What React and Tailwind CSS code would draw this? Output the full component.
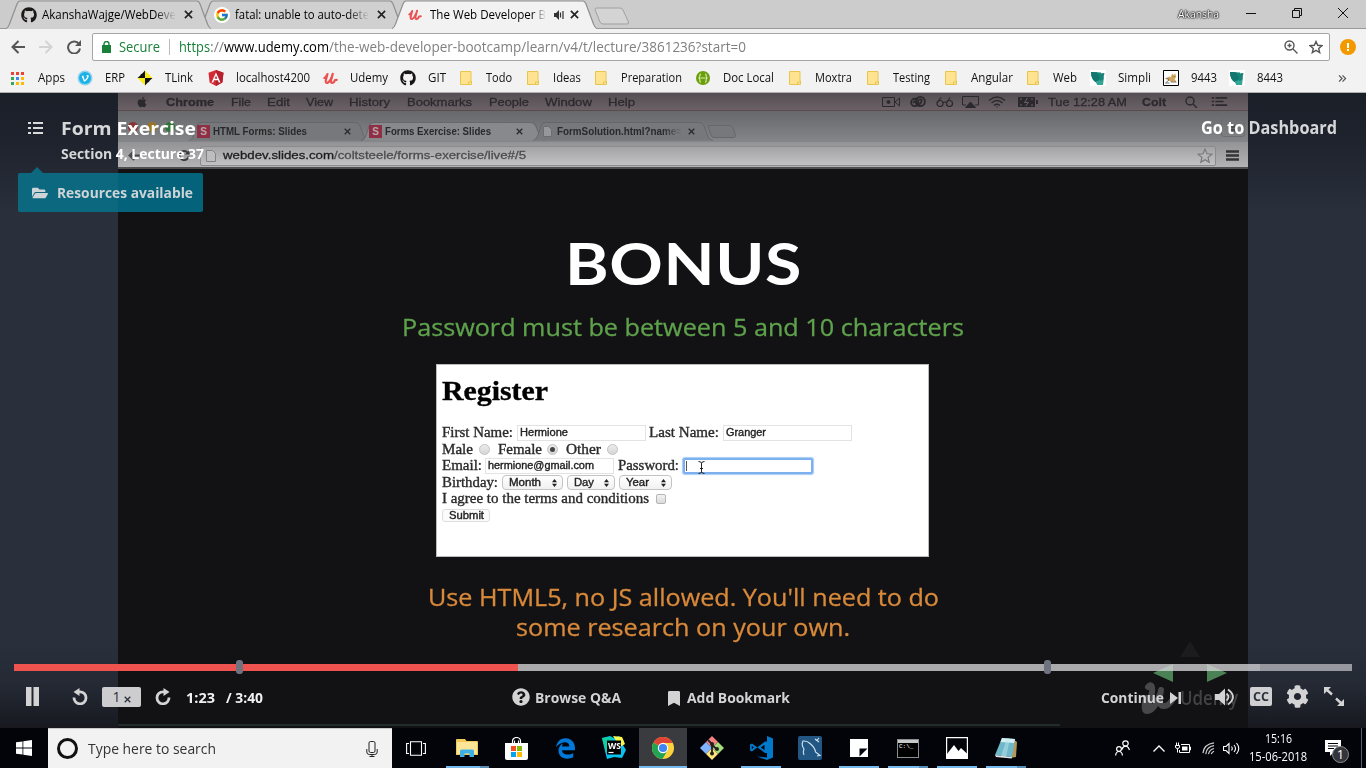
import React, { useLayoutEffect, useRef } from "react";
import { FaGithub, FaFolderOpen, FaQuestionCircle, FaBookmark, FaCog, FaApple, FaEdgeLegacy } from "react-icons/fa";
import { FcGoogle } from "react-icons/fc";

/* Text that is fitted horizontally to the width of its box. */
function Fit({ className = "", children }) {
  const outer = useRef(null);
  const inner = useRef(null);
  useLayoutEffect(() => {
    const s = outer.current.clientWidth / inner.current.getBoundingClientRect().width;
    inner.current.style.transform = `scaleX(${s})`;
  }, []);
  return (
    <span ref={outer} className={`block shrink-0 whitespace-nowrap ${className}`}>
      <span ref={inner} className="inline-block origin-left">{children}</span>
    </span>
  );
}

function Close({ size = "h-[9px] w-[9px]", className = "" }) {
  return (
    <svg viewBox="0 0 10 10" className={`shrink-0 ${size} ${className}`} fill="none" stroke="currentColor" strokeWidth="1.8">
      <path d="M1 1l8 8M9 1l-8 8" />
    </svg>
  );
}

function UdemyMark({ className = "" }) {
  return (
    <svg viewBox="0 0 16 14" className={`shrink-0 ${className}`} fill="none" stroke="currentColor" strokeLinecap="round" strokeLinejoin="round">
      <path d="M1.300 6.500Q3.500 5 4.800 2.200L3 9" strokeWidth="2.200" />
      <path d="M3 8.500Q2.300 12.300 4.600 11.800Q7 10.800 9 6" strokeWidth="2.200" />
      <path d="M10.400 2L8.600 8.500Q8 11.800 10 11.800Q12 11.300 12.800 8.700L14.700 8.500" strokeWidth="2.400" />
    </svg>
  );
}

function Tab({ active, z, icon, children, extra, closeClass, textClass }) {
  return (
    <div className={`relative -ml-3 flex h-[29px] w-[205px] shrink-0 items-center ${z}`}>
      <svg className="absolute inset-0" width="205" height="29" viewBox="0 0 205 29">
        <path d="M0 28.5C2 28 2.5 26.500 3.500 24L11 4C12 1.500 12.500 1 14 1H191C192.500 1 193 1.500 194 4L201.500 24C202.500 26.500 203 28 205 28.500V29H0Z" fill={active ? "#f2f2f2" : "#d0d0d0"} />
        <path d="M0 28.5C2 28 2.5 26.5 3.5 24L11 4C12 1.5 12.5 1 14 1H191C192.500 1 193 1.500 194 4L201.500 24C202.500 26.500 203 28 205 28.500" fill="none" stroke="#8f8f8f" strokeWidth="1.2" />
      </svg>
      <div className="relative ml-[14px] flex h-4 w-[18px] shrink-0 items-center justify-center">{icon}</div>
      <Fit className={`relative text-[12px] leading-[16px] ${textClass}`}>{children}</Fit>
      {extra}
      <Close className={`relative text-[#222] ${closeClass}`} />
    </div>
  );
}

const Folder = () => (
  <svg viewBox="0 0 12 14" className="h-[14px] w-3">
    <path d="M.5.5h10.500v9.500h.5v3.500h-11z" fill="#ffe391" stroke="#e8c64d" />
    <path d="M8.500 13.500v-2.500h2.500" fill="none" stroke="#e8c64d" />
  </svg>
);

const AppsIcon = () => (
  <span className="-ml-px grid grid-cols-3 gap-[2px]">
    {["bg-[#ea4335]", "bg-[#ea4335]", "bg-[#ea4335]", "bg-[#34a853]", "bg-[#4285f4]", "bg-[#fbbc05]", "bg-[#34a853]", "bg-[#fbbc05]", "bg-[#fbbc05]"].map((c, i) => (
      <i key={i} className={`h-[3px] w-[3px] ${c}`} />
    ))}
  </span>
);

const Vimeo = () => (
  <svg viewBox="0 0 16 16" className="h-4 w-4">
    <circle cx="8" cy="8" r="7.500" fill="#8fd3ee" />
    <circle cx="8" cy="8" r="6" fill="#1ab1e6" />
    <path d="M4.700 6.200l1.500-1 1.500 5q2.500-2 2.600-4l-1.200.1q.5-1.500 2-1.300 1 .3.500 2-1 2.800-3.700 4.500h-1z" fill="#fff" />
  </svg>
);

const TLink = () => (
  <svg viewBox="0 0 16 16" className="h-4 w-4">
    <path d="M8 8V.5L5.500 3.200Q3.500 4 3.200 5.500L.5 8z" fill="#111" />
    <path d="M8 8V.5l2.500 2.700Q12.500 4 12.800 5.500L15.500 8z" fill="#f7ec13" />
    <path d="M8 8H.5l2.700 2.500Q4 12.500 5.500 12.800L8 15.500z" fill="#f7ec13" />
    <path d="M8 8h7.500l-2.700 2.500Q12 12.500 10.500 12.800L8 15.500z" fill="#111" />
  </svg>
);

const Angular = () => (
  <svg viewBox="0 0 16 16" className="h-4 w-4">
    <path d="M8 0l7.500 2.700-1.100 9.700L8 16l-6.400-3.600L.5 2.700z" fill="#d42a33" />
    <path d="M8 0l7.500 2.700-1.100 9.700L8 16z" fill="#b5202c" />
    <path d="M8 2.500L3.500 12.500h1.700l.9-2.200h3.800l.9 2.200h1.700zM8 5.600l1.300 3.200H6.700z" fill="#fff" />
  </svg>
);

const DocLocal = () => (
  <svg viewBox="0 0 14 14" className="h-[14px] w-[14px]">
    <circle cx="7" cy="7" r="7" fill="#6a9e0a" />
    <path d="M5 3Q3.800 3 3.900 4.500T3 7q1 .5.900 2.500T5 11M9 3q1.200 0 1.100 1.500T11 7q-1 .5-.900 2.500T9 11M4.500 7h5" fill="none" stroke="#dcecb8" strokeWidth="1.100" />
  </svg>
);

const Simpli = () => (
  <svg viewBox="0 0 16 16" className="h-4 w-4">
    <path d="M0 0h16v16H0z" fill="#fff" />
    <path d="M1 2l10 .5v11l-4-.5Q1 10 1 2z" fill="#178a80" />
    <path d="M1 2l6 .3 3 5v6l-3-.3Q1 10 1 2z" fill="#12776f" />
    <path d="M6 11q3 .5 4-2l4-2-1 8H7z" fill="#35a596" />
    <path d="M9.500 3.500L14.500 3l-1.500 7-3 1z" fill="#1b8479" />
  </svg>
);

const Tomcat = () => (
  <svg viewBox="0 0 16 16" className="h-4 w-4">
    <path d="M.5.5h15v15H.5z" fill="#fff" stroke="#000" />
    <path d="M3 9l3-2.500 2 .5 1-3.500L10.500 5l2-1.500.5 4-1.500 1.500 2.500 3.500-3.500-1L8 12l-2-1.500z" fill="#d2a75c" />
    <path d="M2.500 8.500l2-.5 1.500 2-3.500 3h4M9.500 6.500h.8M11.500 6.500h.8M8 12h5" stroke="#666" strokeWidth=".9" fill="none" />
  </svg>
);

const bookmarks = [
  ["Apps", <AppsIcon />, "w-[67px]", "w-[27px]"],
  ["ERP", <Vimeo />, "w-[60px]", "w-[20px]"],
  ["TLink", <TLink />, "w-[71px]", "w-[28px]"],
  ["localhost4200", <Angular />, "w-[114px]", "w-[74px]"],
  ["Udemy", <UdemyMark className="h-[13px] w-[15px] text-[#eb5252]" />, "w-[78px]", "w-[38px]"],
  ["GIT", <FaGithub className="h-4 w-4 text-[#181616]" />, "w-[58px]", "w-[18px]"],
  ["Todo", <Folder />, "w-[67px]", "w-[26px]"],
  ["Ideas", <Folder />, "w-[68px]", "w-[28px]"],
  ["Preparation", <Folder />, "w-[102px]", "w-[61px]"],
  ["Doc Local", <DocLocal />, "w-[92px]", "w-[51px]"],
  ["Moxtra", <Folder />, "w-[78px]", "w-[37px]"],
  ["Testing", <Folder />, "w-[78px]", "w-[37px]"],
  ["Angular", <Folder />, "w-[82px]", "w-[42px]"],
  ["Web", <Folder />, "w-[65px]", "w-[24px]"],
  ["Simpli", <Simpli />, "w-[73px]", "w-[33px]"],
  ["9443", <Tomcat />, "w-[66px]", "w-[26px]"],
  ["8443", <Simpli />, "w-[109px]", "w-[26px]"],
];

function Browser() {
  return (
    <header className="relative z-10 h-[93px] bg-[#f2f2f2]">
      <div className="flex h-[29px] items-center bg-[#cccccc] pl-[18px] shadow-[inset_0_-1px_0_#999]">
        <Tab z="z-20" textClass="w-[134px] ml-[4px] [mask-image:linear-gradient(90deg,#000_84%,transparent)]" closeClass="ml-[8px]" icon={<FaGithub className="h-4 w-4 text-[#1b1817]" />}>
          AkanshaWajge/WebDeve
        </Tab>
        <Tab z="z-10" textClass="w-[134px] ml-[4px] [mask-image:linear-gradient(90deg,#000_84%,transparent)]" closeClass="ml-[8px]"
          icon={<span className="flex h-4 w-4 items-center justify-center rounded-full bg-white"><FcGoogle className="h-[14px] w-[14px]" /></span>}>
          fatal: unable to auto-dete
        </Tab>
        <Tab active z="z-30" textClass="w-[116px] ml-[6px] [mask-image:linear-gradient(90deg,#000_88%,transparent)]" closeClass="ml-[6px]"
          icon={<UdemyMark className="h-[12px] w-[14px] text-[#eb5252]" />}
          extra={
            <svg viewBox="0 0 10 10" className="relative ml-[8px] h-[10px] w-[10px] shrink-0" fill="#333">
              <path d="M0 3h2l3-3v10L2 7H0z" />
              <path d="M6.500 2.500v5M9 1v8" stroke="#333" strokeWidth="1.200" />
            </svg>
          }>
          The Web Developer B
        </Tab>
        <svg viewBox="0 0 36 18" className="-ml-[3px] mt-[2px] h-[18px] w-[36px] shrink-0">
          <path d="M1 2.500Q1 1 3 1H26Q28 1 29 3L34.500 15Q35 17 33 17H9Q7 17 6 15Z" fill="#d4d4d4" stroke="#a0a0a0" />
        </svg>
        <Fit className="-mt-px ml-[548px] w-[41px] text-[11px] leading-4 text-white [text-shadow:0_0_2px_#000,0_0_2px_#000,0_0_1px_#000]">Akansha</Fit>
        <svg viewBox="0 0 10 10" className="-mt-[3px] ml-[27px] h-[10px] w-[10px] shrink-0" stroke="#111"><path d="M0 5.500h10" /></svg>
        <svg viewBox="0 0 10 10" className="-mt-[3px] ml-[36px] h-[10px] w-[10px] shrink-0" stroke="#111" fill="none"><path d="M.5 2.500h7v7h-7zM2.500 2.500v-2h7v7h-2" /></svg>
        <svg viewBox="0 0 10 10" className="-mt-[3px] ml-[36px] h-[10px] w-[10px] shrink-0" stroke="#111"><path d="M0 0l10 10M10 0L0 10" /></svg>
      </div>

      <div className="flex h-[35px] items-center">
        <svg viewBox="0 0 14 14" className="ml-[11px] h-[14px] w-[14px] shrink-0" fill="none" stroke="#555" strokeWidth="2"><path d="M14 7H1.500M7.500 1L1.500 7l6 6" /></svg>
        <svg viewBox="0 0 14 14" className="ml-[14px] h-[14px] w-[14px] shrink-0" fill="none" stroke="#d3d3d3" strokeWidth="2"><path d="M0 7h12.500M6.500 1l6 6-6 6" /></svg>
        <svg viewBox="0 0 14 14" className="ml-[14px] h-[14px] w-[14px] shrink-0" fill="none" stroke="#555" strokeWidth="2"><path d="M12 4A6 6 0 1 0 13 8.500" /><path d="M14 0v6H8z" fill="#555" stroke="none" /></svg>
        <div className="ml-[11px] flex h-[28px] w-[1238px] shrink-0 items-center rounded-[2px] border border-[#a5a5a5] bg-white text-[14px] leading-[20px] text-[#808080]">
          <svg viewBox="0 0 9 12" className="ml-[9px] h-[12px] w-[9px] shrink-0"><path d="M0 4h9v8H0z" fill="#188038" /><path d="M2 4.500V3a2.500 2.500 0 0 1 5 0v1.500" fill="none" stroke="#188038" strokeWidth="1.400" /></svg>
          <Fit className="ml-[8px] w-[41px] text-[#188038]">Secure</Fit>
          <i className="ml-[9px] h-4 w-px bg-[#bbb]" />
          <Fit className="ml-[9px] w-[31px] text-[#188038]">https</Fit>
          <Fit className="w-[14px]">://</Fit>
          <Fit className="w-[105px] text-black">www.udemy.com</Fit>
          <Fit className="w-[417px]">/the-web-developer-bootcamp/learn/v4/t/lecture/3861236?start=0</Fit>
          <svg viewBox="0 0 14 14" className="ml-[538px] h-[14px] w-[14px] shrink-0" fill="none" stroke="#555" strokeWidth="1.400"><circle cx="5.500" cy="5.500" r="4.500" /><path d="M9 9l4.500 4.500M3.500 5.500h4M5.500 3.500v4" /></svg>
          <svg viewBox="0 0 14 14" className="ml-[11px] h-[14px] w-[14px] shrink-0" fill="none" stroke="#555" strokeWidth="1.400"><path d="M7 1.500l1.700 3.800 4.200.4-3.200 2.800 1 4.100L7 10.400l-3.700 2.200 1-4.100L1.100 5.700l4.200-.4z" /></svg>
        </div>
        <span className="ml-[10px] flex h-4 w-4 shrink-0 flex-col items-center justify-center gap-px rounded-full bg-[#f29900]">
          <i className="h-[5px] w-[2px] bg-white" /><i className="h-[2px] w-[2px] bg-white" />
        </span>
      </div>

      <div className="flex h-[28px] items-center pl-[10px] text-[12px] leading-4 text-[#111]">
        {bookmarks.map(([name, icon, pitch, width]) => (
          <div key={name} className={`flex shrink-0 items-center ${pitch}`}>
            <span className="flex h-4 w-4 shrink-0 items-center justify-center">{icon}</span>
            <Fit className={`ml-3 ${width}`}>{name}</Fit>
          </div>
        ))}
        <svg viewBox="0 0 9 8" className="h-[7px] w-[9px] shrink-0" fill="none" stroke="#555" strokeWidth="1.400"><path d="M.5.5L4 4 .5 7.500M4.500.5L8 4 4.500 7.500" /></svg>
      </div>
      <div className="h-px bg-[#b0aeb1]" />
    </header>
  );
}

function MacTab({ className, fill, children }) {
  return (
    <div className={`relative flex h-[19px] shrink-0 items-center ${className}`}>
      <svg className="absolute inset-0 h-full w-full" viewBox="0 0 180 19" preserveAspectRatio="none">
        <path d="M0 18.500Q3 18 5 13L8 4Q9 .5 12 .5H166Q169 .5 171 4L175 14Q176 18 180 18.500" fill={fill} stroke="#5f5f63" strokeOpacity=".7" />
      </svg>
      {children}
    </div>
  );
}

const SlidesIcon = ({ className }) => (
  <span className={`relative flex h-[13px] w-[13px] shrink-0 items-center justify-center bg-[#8e2f45] text-[10px] leading-none font-bold text-[#b9a3a9] ${className}`}>S</span>
);

function Video() {
  return (
    <div className="flex h-[635px] w-[1130px] shrink-0 flex-col overflow-hidden bg-[#121214]">
      <div className="flex h-[18px] shrink-0 items-center border-b border-[#5a4a4c] bg-linear-to-b from-[#544e52] to-[#6b6167] font-['Liberation_Sans',sans-serif] text-[11.500px] leading-[16px] text-[#2c292e] [-webkit-text-stroke:0.3px_#2c292e]">
        <FaApple className="ml-[18px] h-[12px] w-[12px] shrink-0" />
        <Fit className="ml-[18px] w-[48px] font-bold">Chrome</Fit>
        <Fit className="ml-[17px] w-[20px]">File</Fit>
        <Fit className="ml-[16px] w-[23px]">Edit</Fit>
        <Fit className="ml-[16px] w-[27px]">View</Fit>
        <Fit className="ml-[16px] w-[41px]">History</Fit>
        <Fit className="ml-[17px] w-[65px]">Bookmarks</Fit>
        <Fit className="ml-[17px] w-[40px]">People</Fit>
        <Fit className="ml-[16px] w-[47px]">Window</Fit>
        <Fit className="ml-[16px] w-[27px]">Help</Fit>
        <svg viewBox="0 0 18 10" className="ml-[247px] h-[10px] w-[18px] shrink-0" fill="none" stroke="currentColor"><path d="M.5.5h12v9H.5zM13 5l4.500-4v8z" /><circle cx="6.500" cy="5" r="1.500" fill="currentColor" /></svg>
        <svg viewBox="0 0 18 12" className="ml-[9px] h-[11px] w-[18px] shrink-0" fill="none" stroke="currentColor" strokeWidth="2"><circle cx="11.500" cy="6" r="5" /><circle cx="5.500" cy="7" r="4" /><path d="M3.500 7.500q2-3 4.500 0t4 0 1-3.500-3.500 0" /></svg>
        <svg viewBox="0 0 18 10" className="ml-[9px] h-[10px] w-[18px] shrink-0" fill="none" stroke="currentColor" strokeWidth="1.200"><circle cx="4" cy="6.500" r="3" /><circle cx="13.500" cy="6.500" r="3" /><path d="M7 6q2-2 3.500 0M1 6L5 .5M11 5l3-4.500" /></svg>
        <svg viewBox="0 0 17 12" className="ml-[8px] h-[12px] w-[17px] shrink-0" fill="none" stroke="currentColor"><path d="M4 9H.5V.5h16V9H13" /><path d="M3.500 11.500L8.500 6l5 5.500z" fill="currentColor" /></svg>
        <svg viewBox="0 0 18 12" className="ml-[9px] h-[12px] w-[18px] shrink-0" fill="none" stroke="currentColor" strokeWidth="1.400"><path d="M1 4.500q8-7 16 0M3.500 7q5.500-5 11 0M6 9.500q3-2.500 6 0M8.500 11h1" /></svg>
        <svg viewBox="0 0 20 10" className="ml-[12px] h-[10px] w-[20px] shrink-0"><path d="M0 0h17v10H0zM18 3h2v4h-2z" fill="currentColor" /><path d="M9.500 1L6.500 5.500h4L7.500 9M2 2h2M2 8h2M13 2h2M13 8h2" stroke="#6a6166" fill="none" /></svg>
        <Fit className="ml-[10px] w-[79px]">Tue 12:28 AM</Fit>
        <Fit className="ml-[15px] w-[24px] font-bold">Colt</Fit>
        <svg viewBox="0 0 13 12" className="ml-[19px] h-[12px] w-[13px] shrink-0" fill="none" stroke="currentColor" strokeWidth="1.400"><circle cx="5" cy="5" r="4" /><path d="M8 8l4 4" /></svg>
        <svg viewBox="0 0 17 10" className="ml-[13px] h-[9px] w-[17px] shrink-0" stroke="currentColor" strokeWidth="1.800"><path d="M0 1h2.500M4 1h13M0 5h2.500M4 5h9M0 9h2.500M4 9h13" /></svg>
      </div>

      <div className="flex h-[31px] shrink-0 items-end bg-linear-to-b from-[#67686b] to-[#858689] pb-[1px] font-['Liberation_Sans',sans-serif] text-[10.500px] leading-[13px] font-bold text-[#29292c]">
        <i className="mb-[9px] ml-[10px] h-[10px] w-[10px] shrink-0 rounded-full bg-[#8a3434]" />
        <i className="mb-[9px] ml-[9px] h-[10px] w-[10px] shrink-0 rounded-full bg-[#9a7425]" />
        <i className="mb-[9px] ml-[8px] h-[10px] w-[10px] shrink-0 rounded-full bg-[#2d7638]" />
        <MacTab className="ml-[14px] w-[180px]" fill="#77787b">
          <SlidesIcon className="ml-[8px]" />
          <Fit className="relative ml-[3px] w-[94px]">HTML Forms: Slides</Fit>
          <Close size="h-[7px] w-[7px]" className="relative ml-[37px]" />
        </MacTab>
        <MacTab className="-ml-[8px] w-[184px]" fill="#88898c">
          <SlidesIcon className="ml-[8px]" />
          <Fit className="relative ml-[3px] w-[106px]">Forms Exercise: Slides</Fit>
          <Close size="h-[7px] w-[7px]" className="relative ml-[25px]" />
        </MacTab>
        <MacTab className="-ml-[12px] w-[180px]" fill="#77787b">
          <svg viewBox="0 0 9 11" className="relative ml-[10px] h-[11px] w-[9px] shrink-0"><path d="M.5.5h5l3 3v7h-8z" fill="#96979a" stroke="#6d6d70" /></svg>
          <Fit className="relative ml-[5px] w-[125px] [mask-image:linear-gradient(90deg,#000_85%,transparent)]">FormSolution.html?name=</Fit>
          <Close size="h-[7px] w-[7px]" className="relative ml-[6px]" />
        </MacTab>
        <svg viewBox="0 0 29 13" className="mb-[3px] -ml-[6px] h-[13px] w-[29px] shrink-0"><path d="M1 .5h22q2 0 3 2l2.500 8q0 2-2 2H7q-2 0-3-2z" fill="#77787b" stroke="#66676a" /></svg>
        <span className="mb-[4px] ml-[485px] flex h-[19px] w-[24px] shrink-0 items-center justify-center rounded-[3px] border border-[#6c6d70]">
          <svg viewBox="0 0 10 10" className="h-[8px] w-[8px]" fill="#4d4d50"><circle cx="5" cy="3" r="2.500" /><path d="M0 10q0-4 5-4t5 4z" /></svg>
        </span>
      </div>

      <div className="flex h-[27px] shrink-0 items-center border-b-2 border-[#4e4e50] bg-linear-to-b from-[#939396] to-[#b3b3b5] pt-[2px] font-['Liberation_Sans',sans-serif] text-[11.500px] leading-[15px] text-[#4c4c4f] [-webkit-text-stroke:0.3px]">
        <svg viewBox="0 0 14 12" className="ml-[9px] h-[11px] w-[14px] shrink-0" fill="none" stroke="#4a4a4d" strokeWidth="2"><path d="M14 6H2M7 1L2 6l5 5" /></svg>
        <svg viewBox="0 0 12 12" className="ml-[37px] h-[11px] w-[12px] shrink-0" fill="none" stroke="#3c3c40" strokeWidth="2"><path d="M10 3A5 5 0 1 0 11 7" /><path d="M12 0v5H7z" fill="#3c3c40" stroke="none" /></svg>
        <div className="ml-[10px] flex h-[20px] w-[1016px] shrink-0 items-center rounded-[2px] border border-[#8b8b8e] bg-linear-to-b from-[#a3a3a5] to-[#c2c2c4]">
          <svg viewBox="0 0 10 12" className="ml-[5px] h-[12px] w-[10px] shrink-0"><path d="M.5.5h6l3 3v8h-9z" fill="#bdbdbf" stroke="#838386" /></svg>
          <Fit className="ml-[7px] w-[111px] text-[#1d1d20]">webdev.slides.com</Fit>
          <Fit className="w-[192px]">/coltsteele/forms-exercise/live#/5</Fit>
          <svg viewBox="0 0 14 14" className="ml-[671px] h-[16px] w-[16px] shrink-0" fill="#b5b5b7" stroke="#77777a"><path d="M7 1l1.700 4 4.300.4-3.300 2.800 1 4.300L7 10.300l-3.700 2.200 1-4.300L1 5.400 5.300 5z" /></svg>
        </div>
        <svg viewBox="0 0 13 11" className="ml-[10px] h-[11px] w-[13px] shrink-0" stroke="#333336" strokeWidth="2.400"><path d="M0 1.500h13M0 5.500h13M0 9.500h13" /></svg>
      </div>

      <div className="flex flex-col items-center pt-[60px]">
        <Fit className="w-[237px] font-['Lato',sans-serif] text-[56.500px] leading-[68px] font-bold tracking-[0.500px] text-white">BONUS</Fit>
        <Fit className="mt-[14px] w-[562px] text-[23.500px] leading-[32px] text-[#5fa24c] [-webkit-text-stroke:0.3px]">Password must be between 5 and 10 characters</Fit>
        <Form />
        <Fit className="mt-[25px] w-[511px] text-[23.500px] leading-[30px] text-[#d8893a] [-webkit-text-stroke:0.3px]">Use HTML5, no JS allowed. You'll need to do</Fit>
        <Fit className="w-[334px] text-[23.500px] leading-[30px] text-[#d8893a] [-webkit-text-stroke:0.3px]">some research on your own.</Fit>
      </div>
    </div>
  );
}

const Field = ({ className = "", children }) => (
  <span className={`flex h-[16px] w-[129px] shrink-0 items-center border border-[#e3e3e3] pl-[2px] font-['Liberation_Sans',sans-serif] text-[10px] text-[#222] ${className}`}>{children}</span>
);

const Radio = ({ on, className }) => (
  <span className={`flex h-[11px] w-[11px] shrink-0 items-center justify-center rounded-full border border-[#c2c2c2] bg-linear-to-b from-[#ececec] to-[#d6d6d6] ${className}`}>
    {on && <i className="h-[5px] w-[5px] rounded-full bg-[#444]" />}
  </span>
);

const Select = ({ className, textClass, children }) => (
  <span className={`flex h-[15px] shrink-0 items-center justify-between rounded-[4px] border border-[#c4c4c4] bg-linear-to-b from-white to-[#f1f1f1] pr-[5px] pl-[6px] font-['Liberation_Sans',sans-serif] text-[10px] text-[#222] ${className}`}>
    <Fit className={textClass}>{children}</Fit>
    <svg viewBox="0 0 5 8" className="h-[8px] w-[5px]" fill="#222"><path d="M0 3.300L2.500 0 5 3.300zM0 4.700L2.500 8 5 4.700z" /></svg>
  </span>
);

function Form() {
  return (
    <div className="mt-[21px] mr-px h-[193px] w-[493px] shrink-0 border border-[#bbb] bg-white pl-[5px] font-['Liberation_Serif',serif] text-[14px] leading-[16px] text-[#2a2a2a] [-webkit-text-stroke:0.35px]">
      <Fit className="mt-[9px] w-[106px] text-[27.500px] leading-[34px] font-bold text-black">Register</Fit>
      <div className="mt-[17px] flex h-[16.500px] items-center">
        <Fit className="w-[71px]">First Name:</Fit>
        <Field className="ml-[4px]"><Fit className="w-[48px]">Hermione</Fit></Field>
        <Fit className="ml-[3px] w-[70px]">Last Name:</Fit>
        <Field className="ml-[4px]"><Fit className="w-[40px]">Granger</Fit></Field>
      </div>
      <div className="flex h-[16.500px] items-center">
        <Fit className="w-[31px]">Male</Fit>
        <Radio className="ml-[6px]" />
        <Fit className="ml-[8px] w-[44px]">Female</Fit>
        <Radio on className="ml-[5px]" />
        <Fit className="ml-[8px] w-[35px]">Other</Fit>
        <Radio className="ml-[6px]" />
      </div>
      <div className="flex h-[16.500px] items-center">
        <Fit className="w-[40px]">Email:</Fit>
        <Field className="ml-[3px]"><Fit className="w-[106px]">hermione@gmail.com</Fit></Field>
        <Fit className="ml-[4px] w-[61px]">Password:</Fit>
        <span className="ml-[4px] flex h-[16px] w-[130px] shrink-0 items-center rounded-[2px] border-2 border-[#7db0ee] bg-white shadow-[0_0_1px_1px_#a9cbf5]">
          <i className="ml-[1px] h-[10px] w-px bg-[#555]" />
          <svg viewBox="0 0 7 13" className="mt-[3px] ml-[11px] h-[13px] w-[7px]" fill="none" stroke="#222"><path d="M.5.5q3 0 3 2v8q0 2-3 2M6.500.5q-3 0-3 2v8q0 2 3 2M2 7.500h3" /></svg>
        </span>
      </div>
      <div className="flex h-[16.500px] items-center">
        <Fit className="w-[56px]">Birthday:</Fit>
        <Select className="ml-[4px] w-[61px]" textClass="w-[32px]">Month</Select>
        <Select className="ml-[4px] w-[48px]" textClass="w-[20px]">Day</Select>
        <Select className="ml-[4px] w-[53px]" textClass="w-[23px]">Year</Select>
      </div>
      <div className="flex h-[16.500px] items-center">
        <Fit className="w-[207px]">I agree to the terms and conditions</Fit>
        <i className="ml-[7px] h-[10px] w-[10px] rounded-[2px] border border-[#b5b5b5] bg-linear-to-b from-[#f2f2f2] to-[#dadada]" />
      </div>
      <div className="flex h-[16.500px] items-center">
        <span className="flex h-[13px] w-[48px] items-center rounded-[3px] border border-[#dedede] bg-[#fbfbfb] pl-[6px] font-['Liberation_Sans',sans-serif] text-[10px] text-[#222]">
          <Fit className="w-[35px]">Submit</Fit>
        </span>
      </div>
    </div>
  );
}

function Player() {
  return (
    <main className="relative flex h-[635px] justify-start overflow-hidden bg-[linear-gradient(180deg,#1b1f28_0px,#1f232d_50px,#29303c_120px,#29303c_545px,#252a35_590px,#17191f_635px)] pl-[118px]">
      <Video />

      <div className="absolute inset-x-0 top-0 flex items-start font-bold">
        <div className="ml-[18px]">
          <div className="flex items-center pt-[23px]">
            <svg viewBox="0 0 15 14" className="ml-[10px] h-[14px] w-[15px] shrink-0" stroke="#d9dadc" strokeWidth="2"><path d="M0 2h3M5 2h10M0 7h3M5 7h10M0 12h3M5 12h10" /></svg>
            <Fit className="ml-[18px] w-[135px] text-[18px] leading-[24px] text-white"><span className="text-[#d5d7d9]">Form </span>Exercise</Fit>
          </div>
          <Fit className="mt-[5px] ml-[43px] w-[143px] text-[14px] leading-[18px] text-white"><span className="text-[#d5d7d9]">Section </span>4, Lecture 37</Fit>
          <svg viewBox="0 0 12 6" className="mt-[4px] ml-[13px] h-[6px] w-[12px]"><path d="M0 6l6-6 6 6z" fill="#0c687f" /></svg>
          <div className="flex h-[39px] w-[185px] items-center rounded-[2px] bg-[linear-gradient(90deg,#0c687f_100px,#04627a_100px)] text-[#ced4d7]">
            <FaFolderOpen className="ml-[14px] h-[16px] w-[16px] shrink-0" />
            <Fit className="ml-[9px] w-[136px] text-[14px] leading-5 font-bold">Resources available</Fit>
          </div>
        </div>
        <Fit className="mt-[23px] mr-[29px] ml-auto w-[136px] text-[17px] leading-[24px] text-white">Go to <span className="text-[#d5d7d9]">Dashboard</span></Fit>
      </div>

      {/* slide navigation arrows and watermark in the corner of the video */}
      <svg className="absolute top-[545px] left-[1135px]" width="108" height="80" viewBox="0 0 108 80">
        <path d="M45 19L55 3l10 16z" fill="#1c1c1e" />
        <path d="M18 35l20-9v18zM92 35l-20-9v18z" fill="#4a8155" />
        <path d="M13 49Q18 44 17 54Q15 66 11 70M11 60Q8 73 12 73Q20 72 25 56M26 52Q23 67 28 68Q33 69 38 61" fill="none" stroke="#48484a" strokeWidth="6" strokeLinecap="round" strokeLinejoin="round" />
      </svg>
      <Fit className="absolute top-[591px] left-[1180px] w-[58px] text-[20px] leading-[28px] font-semibold text-[#434345]">Udemy</Fit>
      <div className="absolute top-[631px] left-[118px] h-[2px] w-[942px] bg-[#222c2b]" />

      <div className="absolute inset-x-0 bottom-0 h-[68px] font-bold text-[#d3d3d4]">
        <div className="relative mx-[14px] mt-[4px] flex h-[7px] w-[1338px]">
          <div className="h-full w-[504px] bg-[#ef5350]" />
          <div className="h-full w-[742px] bg-[#d8d7da]/77" />
          <div className="h-full w-[92px] bg-[#9797a0]" />
          <i className="absolute -top-[4px] left-[222px] h-[14px] w-[7px] rounded-[3px] bg-[#6e737f]" />
          <i className="absolute -top-[4px] left-[1030px] h-[14px] w-[7px] rounded-[3px] bg-[#6e737f]" />
        </div>
        <div className="mt-[13px] flex h-[28px] items-center">
          <svg viewBox="0 0 13 19" className="-mt-[3px] ml-[26px] h-[19px] w-[13px] shrink-0" fill="currentColor"><path d="M0 0h5.500v19H0zM7.500 0H13v19H7.500z" /></svg>
          <svg viewBox="0 0 16 17" className="-mt-[3px] ml-[33px] h-[17px] w-[16px] shrink-0" fill="none" stroke="currentColor" strokeWidth="2.800"><path d="M2 9.500A6 6 0 1 0 8 3.800H5" /><path d="M7.500 0v8L1.500 4z" fill="currentColor" stroke="none" /></svg>
          <div className="-mt-[2px] ml-[14px] flex h-[20px] w-[39px] shrink-0 items-center justify-center gap-[3px] rounded-[2px] bg-[#cdcdd0] text-[#2b303c]">
            <span className="text-[14px] leading-5 font-normal">1</span><Close size="h-[7px] w-[7px]" className="mt-[4px]" />
          </div>
          <svg viewBox="0 0 16 17" className="-mt-[3px] ml-[14px] h-[17px] w-[16px] shrink-0" fill="none" stroke="currentColor" strokeWidth="2.800"><path d="M14 9.500A6 6 0 1 1 8 3.800h3" /><path d="M8.500 0v8l6-4z" fill="currentColor" stroke="none" /></svg>
          <Fit className="ml-[15px] w-[29px] text-[14px] leading-5 font-bold text-[#f1f1f2]">1:23</Fit>
          <Fit className="ml-[11px] w-[37px] text-[14px] leading-5 font-bold text-[#f1f1f2]">/ 3:40</Fit>
          <FaQuestionCircle className="-mt-[2px] ml-[249px] h-[18px] w-[18px] shrink-0" />
          <Fit className="ml-[5px] w-[86px] text-[14px] leading-5">Browse Q&amp;A</Fit>
          <FaBookmark className="ml-[47px] h-[15px] w-[12px] shrink-0" preserveAspectRatio="none" />
          <Fit className="ml-[7px] w-[103px] text-[14px] leading-5">Add Bookmark</Fit>
          <Fit className="ml-[311px] w-[63px] text-[14px] leading-5">Continue</Fit>
          <svg viewBox="0 0 11 12" className="ml-[6px] h-[12px] w-[11px] shrink-0" fill="currentColor"><path d="M0 0l8 6-8 6zM8.500 0H11v12H8.500z" /></svg>
          <svg viewBox="0 0 20 18" className="-mt-[3px] ml-[34px] h-[18px] w-[20px] shrink-0" fill="none" stroke="currentColor" strokeWidth="1.800"><path d="M0 6h4l6-5.500v17L4 12H0z" fill="currentColor" stroke="none" /><path d="M11.500 5.500q4 3.500 0 7M13 1.500q10 7.500 0 15" /></svg>
          <span className="-mt-[3px] ml-[15px] flex h-[19px] w-[22px] shrink-0 items-center justify-center rounded-[2px] bg-[#d0d0d3] text-[12px] leading-[16px] font-bold text-[#2b303c]"><Fit className="w-[16px]">CC</Fit></span>
          <FaCog className="-mt-[3px] ml-[14px] h-[23px] w-[23px] shrink-0" />
          <svg viewBox="0 0 20 19" className="-mt-[3px] ml-[15px] h-[19px] w-[20px] shrink-0" stroke="currentColor" strokeWidth="2.400" fill="currentColor"><path d="M2 2l6 5.500M12 11.500l6 5.500" /><path d="M0 0h7L0 7zM20 19h-7l7-7z" stroke="none" /></svg>
        </div>
      </div>
    </main>
  );
}

const Explorer = () => (
  <svg viewBox="0 0 22 18" className="h-[18px] w-[22px]"><path d="M0 1q0-1 1-1h8l1.500 2H21q1 0 1 1v13H0z" fill="#f0c95a" /><path d="M1 3h20v12H1z" fill="#fde597" /><path d="M4 18v-6q0-1.500 1.500-1.500h11Q18 10.500 18 12v6h-4.500v-3.500h-5V18z" fill="#3fb0e6" /></svg>
);
const Store = () => (
  <svg viewBox="0 0 23 23" className="h-[23px] w-[23px]"><path d="M7.500 6V4a4 3.500 0 0 1 8 0v2M9.500 6V3.500M13.500 6V3.500" fill="none" stroke="#fff" strokeWidth="1.200" /><path d="M0 6h23v15q0 2-2 2H2q-2 0-2-2z" fill="#fff" /><path d="M6 9h5v5H6z" fill="#f25022" /><path d="M12 9h5v5h-5z" fill="#7fba00" /><path d="M6 15h5v5H6z" fill="#00a4ef" /><path d="M12 15h5v5h-5z" fill="#ffb900" /></svg>
);
const WebStorm = () => (
  <span className="relative flex h-6 w-6 items-center justify-center">
    <svg viewBox="0 0 24 24" className="absolute inset-0 h-6 w-6"><path d="M0 2l8-2 4 2 5-2 5 5-1 4 3 5-4 8-8-1-7 2-2-8z" fill="#07c3f2" /><path d="M11 0l9 1 3 7-5 3z" fill="#fcf84a" /><path d="M0 2l9-1 2 8-7 7z" fill="#0dd0a0" /><path d="M5 4.500h14v14H5z" fill="#000" /><path d="M6.500 16.500h5" stroke="#fff" strokeWidth="1.200" /></svg>
    <Fit className="relative -mt-[5px] w-[13px] text-[9px] leading-[10px] font-bold text-white">WS</Fit>
  </span>
);
const Chrome = () => (
  <svg viewBox="0 0 22 22" className="h-[22px] w-[22px]"><circle cx="11" cy="11" r="11" fill="#fdd23b" /><path d="M11 11L1.500 5.500A11 11 0 0 0 10.500 22l5-8.500z" fill="#23a455" /><path d="M11 11L1.500 5.500A11 11 0 0 1 20.800 6H11l-4 7z" fill="#e04434" /><circle cx="11" cy="11" r="5.200" fill="#fff" /><circle cx="11" cy="11" r="4.100" fill="#3f86f4" /></svg>
);
const Git = () => (
  <svg viewBox="0 0 24 24" className="h-6 w-6"><path d="M12 0l6 6-6 6-6-6z" fill="#f78080" /><path d="M6 6l6 6-6 6-6-6z" fill="#80b3ff" /><path d="M18 6l6 6-6 6-6-6z" fill="#a5de7a" /><path d="M12 12l6 6-6 6-6-6z" fill="#ffe47a" /><path d="M8 4l4 4v10M12 9l4.500 4" stroke="#222" strokeWidth="1.800" fill="none" /><circle cx="12" cy="8" r="2" fill="#222" /><circle cx="17" cy="13" r="2" fill="#222" /><circle cx="12" cy="17.500" r="2" fill="#222" /></svg>
);
const VSCode = () => (
  <svg viewBox="0 0 24 24" className="h-6 w-6"><path d="M18 0l6 2.500v19L18 24 8 20.500l10 1z" fill="#0179cb" /><path d="M16 5.500L3 15.500 1 14.500v-6L3 7.500l13 9.500h2V5.500z" fill="#0179cb" /><path d="M15.500 8.800v5.400l-3.700-2.700zM2.800 9.800v3.500l2-1.800z" fill="#02050c" /></svg>
);
const MySQL = () => (
  <svg viewBox="0 0 24 24" className="h-6 w-6"><rect width="24" height="24" rx="2" fill="#215782" /><path d="M6 19q-1.500-3 0-6-3-4-1-8 4-.5 7 2.500 5 4 5.500 8.500l4.500 3.500-3 .500M17 3l4 3M18.500 5l2.500-3" fill="none" stroke="#d6e5f0" strokeWidth="1.100" /></svg>
);
const Sticky = () => (
  <svg viewBox="0 0 18 18" className="h-[18px] w-[18px]"><path d="M0 0h18v18H0z" fill="#fff" /><path d="M9.500 17.500v-8h8z" fill="#04060d" /></svg>
);
const Cmd = () => (
  <span className="flex h-[19px] w-[22px] flex-col border border-[#8d8d8d] bg-black">
    <i className="h-[3px] bg-[#c9c9c9]" />
    <span className="pl-px font-['Liberation_Mono',monospace] text-[6px] leading-[8px] whitespace-nowrap text-white">C:\_</span>
  </span>
);
const Photos = () => (
  <svg viewBox="0 0 22 22" className="h-[22px] w-[22px]"><path d="M.5.5h21v21H.5z" fill="#02040a" stroke="#fff" strokeWidth="1.400" /><path d="M1 17l7-9 4.500 6L15 11l6.500 6v4.500H1z" fill="#fff" /></svg>
);
const Notepad = () => (
  <svg viewBox="0 0 23 22" className="h-[22px] w-[23px]"><path d="M18 2l4 3-1 15-6 1z" fill="#b4975b" /><path d="M7 1l13 1-3 18L0 18z" fill="#6fb8c9" /><path d="M7 1l13 1-1 4L5.500 5z" fill="#d5eff3" /><path d="M12 1.500l3 .2L11 20l-5-1z" fill="#bce6ee" opacity=".5" /><path d="M0 18l17 2-.500 1.500L1 20z" fill="#dfe6e8" /></svg>
);

/* underline width, split underline for apps with several windows, background */
const apps = [
  ["explorer", <Explorer />, "w-[43px]", ""],
  ["store", <Store />, "", ""],
  ["edge", <FaEdgeLegacy className="h-[21px] w-[21px] text-[#0078d7]" />, "", ""],
  ["webstorm", <WebStorm />, "", ""],
  ["chrome", <Chrome />, "w-[48px]", "bg-[#393b3e]"],
  ["git", <Git />, "", ""],
  ["vscode", <VSCode />, "w-[40px]", ""],
  ["mysql", <MySQL />, "", ""],
  ["sticky", <Sticky />, "w-[40px]", ""],
  ["cmd", <Cmd />, "w-[40px]", ""],
  ["photos", <Photos />, "w-[40px]", ""],
  ["notepad", <Notepad />, "w-[40px]", ""],
];
const several = ["explorer", "cmd", "notepad"];

function Taskbar() {
  return (
    <footer className="flex h-[40px] items-center bg-[#02040a] text-white">
      <svg viewBox="0 0 16 16" className="ml-[16px] h-4 w-4 shrink-0" fill="#fff"><path d="M0 2.300L6.500 1.400v6.200H0zM7.300 1.300L16 0v7.600H7.300zM0 8.400h6.500v6.200L0 13.700zM7.300 8.400H16V16l-8.700-1.300z" /></svg>
      <div className="ml-[16px] flex h-[40px] w-[344px] shrink-0 items-center border-t border-[#c8c8c8] bg-[#f2f2f2]">
        <i className="ml-[9px] h-[21px] w-[21px] rounded-full border-[3px] border-[#111]" />
        <Fit className="ml-[10px] w-[128px] text-[14px] leading-5 text-[#333]">Type here to search</Fit>
        <svg viewBox="0 0 12 16" className="ml-[150px] h-4 w-3 shrink-0" fill="none" stroke="#222"><rect x="3" y=".5" width="6" height="11" rx="1.500" /><path d="M.8 8v3q0 2.500 2.500 2.500h5.400q2.500 0 2.500-2.500V8M6 13.500v2M3.500 15.500h5" /></svg>
      </div>
      <svg viewBox="0 0 20 15" className="ml-[14px] h-[15px] w-[20px] shrink-0" fill="none" stroke="#fff" strokeWidth="1.100"><path d="M4.500.8h11v13.500h-11zM3 2.500H.6v10H3M17 2.500h2.400v10H17" /></svg>
      <nav className="ml-[17px] flex gap-px">
        {apps.map(([name, icon, underline, bg]) => (
          <span key={name} className={`flex h-[40px] w-[48px] flex-col items-center justify-between ${bg}`}>
            <span className="flex h-[38px] items-center pt-[2px]">{icon}</span>
            <i className={`flex h-[2px] justify-end bg-[#76b9ed] ${underline}`}>
              {several.includes(name) && <i className="h-full w-[9px] bg-[#5a8db5]" />}
            </i>
          </span>
        ))}
      </nav>
      <svg viewBox="0 0 15 16" className="ml-[85px] h-4 w-[15px] shrink-0" fill="none" stroke="#fff" strokeWidth="1.200"><circle cx="10.500" cy="3.500" r="2.700" /><path d="M7 9.500q1-3.300 3.500-3.300T14.500 10" /><circle cx="4" cy="9" r="2.400" /><path d="M.6 15.500q.4-4 3.400-4t3.500 4" /></svg>
      <svg viewBox="0 0 12 7" className="ml-[23px] h-[7px] w-[12px] shrink-0" fill="none" stroke="#fff" strokeWidth="1.300"><path d="M.5 6.500L6 1l5.500 5.500" /></svg>
      <svg viewBox="0 0 16 12" className="ml-[10px] h-[12px] w-4 shrink-0" fill="none" stroke="#fff"><path d="M6 2.500h8.500v8h-10V8M14.500 5h1v3h-1M.5 3.500h4v1.500q0 1.500-2 1.500t-2-1.500zM1.500.5v3M3.500.5v3M2.500 6.500v4" /><path d="M7 4.500h5.500v4H7z" fill="#fff" stroke="none" /></svg>
      <svg viewBox="0 0 14 14" className="ml-[11px] h-[13px] w-[13px] shrink-0" fill="none" stroke="#ccc" strokeWidth="1.300"><path d="M1 12Q2 2.500 13 1M4 13Q5 5 13 4M7 13q1-5 6-6M10 13q.5-2 3-3" /></svg>
      <svg viewBox="0 0 17 13" className="ml-[8px] h-[13px] w-[17px] shrink-0" fill="none" stroke="#fff" strokeWidth="1.100"><path d="M.5 4.500h2.500l3-3v10l-3-3H.5zM8.500 4.500q1.500 2 0 4M11 3q3 3.500 0 7M13.500 1q4.500 5.500 0 11" /></svg>
      <div className="ml-[9px] flex w-[58px] shrink-0 flex-col items-center text-[12px] leading-[18px]">
        <Fit className="w-[27px]">15:16</Fit>
        <Fit className="w-[58px]">15-06-2018</Fit>
      </div>
      <div className="relative ml-[18px] h-[16px] w-[16px] shrink-0">
        <svg viewBox="0 0 16 16" className="h-4 w-4"><path d="M0 0h16v12H9l-4 4v-4H0z" fill="#fff" /><path d="M3 3.500h10M3 6h10M3 8.500h6" stroke="#02040a" /></svg>
        <span className="absolute top-[6px] left-[7px] flex h-[17px] w-[17px] items-center justify-center rounded-full border border-[#8c8c8c] bg-[#33353a] text-[13px] leading-none">1</span>
      </div>
      <i className="ml-[20px] h-[40px] w-px bg-[#5c5e63]" />
    </footer>
  );
}

export default function App() {
  return (
    <div className="h-[768px] w-[1366px] overflow-hidden bg-[#02040a] font-['Open_Sans','Noto_Sans',sans-serif]">
      <Browser />
      <Player />
      <Taskbar />
    </div>
  );
}
